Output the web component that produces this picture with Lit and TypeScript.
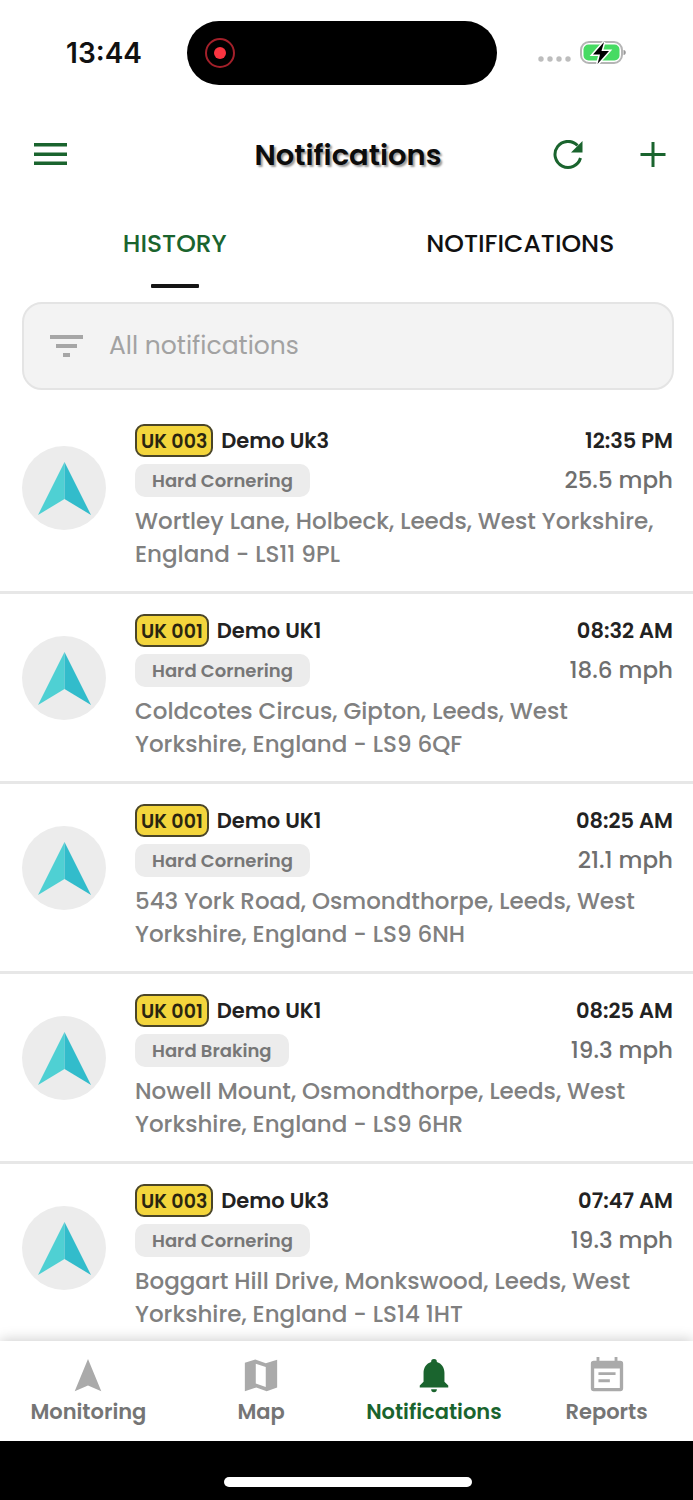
import { LitElement, html, css, svg } from "lit";
import { customElement, property, state } from "lit/decorators.js";
import { classMap } from "lit/directives/class-map.js";

interface VehicleEvent {
  plate: string;
  name: string;
  kind: string;
  time: string;
  speed: string;
  address: string;
}

const EVENTS: VehicleEvent[] = [
  { plate: "UK 003", name: "Demo Uk3", kind: "Hard Cornering", time: "12:35 PM", speed: "25.5 mph", address: "Wortley Lane, Holbeck, Leeds, West Yorkshire, England - LS11 9PL" },
  { plate: "UK 001", name: "Demo UK1", kind: "Hard Cornering", time: "08:32 AM", speed: "18.6 mph", address: "Coldcotes Circus, Gipton, Leeds, West Yorkshire, England - LS9 6QF" },
  { plate: "UK 001", name: "Demo UK1", kind: "Hard Cornering", time: "08:25 AM", speed: "21.1 mph", address: "543 York Road, Osmondthorpe, Leeds, West Yorkshire, England - LS9 6NH" },
  { plate: "UK 001", name: "Demo UK1", kind: "Hard Braking", time: "08:25 AM", speed: "19.3 mph", address: "Nowell Mount, Osmondthorpe, Leeds, West Yorkshire, England - LS9 6HR" },
  { plate: "UK 003", name: "Demo Uk3", kind: "Hard Cornering", time: "07:47 AM", speed: "19.3 mph", address: "Boggart Hill Drive, Monkswood, Leeds, West Yorkshire, England - LS14 1HT" },
];

const NAV = [
  { label: "Monitoring", icon: svg`<path d="M20 2 34 36 20 30 6 36Z"/>` },
  { label: "Map", icon: svg`<path fill-rule="evenodd" d="M3 6 14 2.500 25 6.500 37 3V32L26 36 15 32 3 36ZM14.500 7V28L25 31.500V10.500Z"/>` },
  { label: "Notifications", icon: svg`<path d="M20 2a3 3 0 0 1 3 3.200c5 1.500 8 6 8 11.300v9.500l4 4v2h-30v-2L9 26v-9.500c0-5.300 3-9.800 8-11.300A3 3 0 0 1 20 2Z"/><path d="M17 34h6a3 3 0 0 1-6 0Z"/>` },
  { label: "Reports", icon: svg`<path fill-rule="evenodd" d="M9 0h3v4h16V0h3v4h3a3 3 0 0 1 3 3v26a3 3 0 0 1-3 3H6a3 3 0 0 1-3-3V7a3 3 0 0 1 3-3h3ZM6.500 12v20.500h27V12Z"/><path d="M11 16h18v3H11ZM11 23.500h12v3H11Z"/>` },
];

@customElement("event-row")
class EventRow extends LitElement {
  @property({ attribute: false }) event!: VehicleEvent;

  static styles = css`
    :host {
      display: flex;
      gap: 29px;
      padding: 16px 20px 20px 22px;
      border-bottom: 3px solid #e7e7e7;
    }
    .avatar {
      flex: none;
      width: 84px;
      height: 84px;
      margin-top: 26px;
      border-radius: 50%;
      background: #ececec;
    }
    .body {
      flex: 1;
      min-width: 0;
    }
    .line {
      display: flex;
      justify-content: space-between;
      align-items: center;
      height: 40px;
    }
    .vehicle {
      display: flex;
      align-items: center;
      gap: 8px;
    }
    .plate {
      box-sizing: border-box;
      height: 33px;
      padding: 0 4px;
      border: 2px solid #4a4528;
      border-radius: 9px;
      background: #f3d53c;
      color: #2a2510;
      font-size: 19px;
      font-weight: 600;
      line-height: 31px;
    }
    .name,
    .time {
      color: #222;
      font-size: 21px;
      font-weight: 600;
    }
    .kind {
      padding: 0 17px;
      border-radius: 10px;
      background: #ececec;
      color: #777;
      font-size: 18px;
      font-weight: 600;
      line-height: 33px;
    }
    .speed {
      color: #6f6f6f;
      font-size: 23px;
      font-weight: 500;
    }
    .address {
      margin: 5px 0 0;
      color: #808080;
      font-size: 23px;
      font-weight: 500;
      line-height: 33px;
    }
  `;

  render() {
    const e = this.event;
    return html`
      <svg class="avatar" viewBox="0 0 84 84" aria-hidden="true">
        <path d="M42.500 16 16 69 42.500 53Z" fill="#4fd0d3" />
        <path d="M42.500 16 69 69 42.500 53Z" fill="#32bccb" />
      </svg>
      <div class="body">
        <div class="line">
          <div class="vehicle">
            <span class="plate">${e.plate}</span>
            <span class="name">${e.name}</span>
          </div>
          <time class="time">${e.time}</time>
        </div>
        <div class="line">
          <span class="kind">${e.kind}</span>
          <span class="speed">${e.speed}</span>
        </div>
        <p class="address">${e.address}</p>
      </div>
    `;
  }
}

@customElement("app-root")
class AppRoot extends LitElement {
  @state() private tab = "HISTORY";
  @state() private section = "Notifications";

  static styles = css`
    :host {
      display: flex;
      flex-direction: column;
      height: 100vh;
      background: #fff;
      color: #111;
      font-family: Poppins, Inter, sans-serif;
    }
    button {
      border: 0;
      padding: 0;
      background: none;
      color: inherit;
      font: inherit;
      cursor: pointer;
    }
    svg {
      display: block;
    }
    .status {
      display: grid;
      grid-template-columns: 1fr 310px 1fr;
      align-items: center;
      padding: 21px 9px 0 0;
    }
    .clock {
      justify-self: end;
      padding-right: 45px;
      font-family: Inter, sans-serif;
      font-size: 28px;
      font-weight: 600;
    }
    .island {
      display: flex;
      align-items: center;
      height: 64px;
      padding-left: 17px;
      box-sizing: border-box;
      border-radius: 32px;
      background: #000;
    }
    .signals {
      display: flex;
      align-items: center;
      gap: 8px;
      padding-left: 41px;
    }
    .appbar {
      display: grid;
      grid-template-columns: 1fr auto 1fr;
      align-items: center;
      height: 60px;
      margin-top: 40px;
      padding: 0 27px 0 30px;
      color: #1a642e;
    }
    .title {
      margin: 0;
      color: #0c0c0c;
      font-size: 29px;
      font-weight: 600;
      text-shadow: 2px 2px 2px #0006;
    }
    .menu {
      justify-self: start;
    }
    .actions {
      display: flex;
      justify-self: end;
      gap: 54px;
    }
    .tabs {
      display: flex;
      margin-top: 15px;
      padding-left: 2px;
    }
    .tab {
      display: flex;
      flex: 1;
      flex-direction: column;
      align-items: center;
      gap: 22px;
      height: 88px;
      padding-top: 26px;
      font-size: 25px;
      font-weight: 500;
      line-height: 36px;
    }
    .tab.active {
      color: #1a642e;
    }
    .tab.active::after {
      content: "";
      width: 48px;
      height: 4px;
      border-radius: 1px;
      background: #151515;
    }
    .filter {
      display: flex;
      align-items: center;
      gap: 26px;
      height: 88px;
      box-sizing: border-box;
      margin: 14px 19px 14px 22px;
      padding: 0 26px;
      border: 2px solid #e4e4e4;
      border-radius: 20px;
      background: #f3f3f3;
    }
    .filter-input {
      flex: 1;
      min-width: 0;
      padding: 0;
      border: 0;
      outline: 0;
      background: none;
      color: #555;
      font: 400 25px/36px Poppins, Inter, sans-serif;
    }
    .filter-input::placeholder {
      color: #a2a2a2;
      opacity: 1;
    }
    .list {
      flex: 1;
      min-height: 0;
      overflow: hidden;
    }
    .nav {
      display: flex;
      position: relative;
      height: 100px;
      padding-left: 2px;
      box-sizing: border-box;
      background: #fff;
      box-shadow: 0 -2px 12px #0000002e;
    }
    .nav-item {
      display: flex;
      flex: 1;
      flex-direction: column;
      align-items: center;
      gap: 1px;
      padding-top: 16px;
      color: #aaa;
    }
    .nav-label {
      color: #757575;
      font-size: 21px;
      font-weight: 600;
      line-height: 32px;
    }
    .nav-item.active,
    .nav-item.active .nav-label {
      color: #1a642e;
    }
    .home {
      display: flex;
      justify-content: center;
      align-items: flex-end;
      height: 59px;
      padding: 0 0 13px 2px;
      box-sizing: border-box;
      background: #000;
    }
    .home-bar {
      width: 248px;
      height: 10px;
      border-radius: 5px;
      background: #fff;
    }
  `;

  render() {
    return html`
      <div class="status">
        <span class="clock">13:44</span>
        <div class="island">
          <svg width="32" height="32" viewBox="0 0 32 32" aria-hidden="true">
            <circle cx="16" cy="16" r="14" fill="none" stroke="#a3202a" stroke-width="2" />
            <circle cx="16" cy="16" r="6" fill="#fb3440" />
          </svg>
        </div>
        <div class="signals">
          <svg width="34" height="22" viewBox="0 0 34 22" fill="#bdbdbd" aria-hidden="true">
            <circle cx="3" cy="17" r="2.700" /><circle cx="12" cy="17" r="2.700" />
            <circle cx="21" cy="17" r="2.700" /><circle cx="30" cy="17" r="2.700" />
          </svg>
          <svg width="46" height="26" viewBox="0 0 46 26" aria-hidden="true">
            <rect x="1" y="2" width="41" height="21" rx="8" fill="#fff" stroke="#b5b5b5" stroke-width="2" />
            <rect x="3.500" y="4.500" width="36" height="16" rx="5" fill="#47db63" />
            <path d="M43.500 10c3 0 3 5 0 5Z" fill="#999" />
            <path d="M24 2 13 14.500h7L17.500 24 29 11h-7.500Z" fill="#000" stroke="#fff" stroke-width="3" paint-order="stroke" />
          </svg>
        </div>
      </div>

      <header class="appbar">
        <button class="menu" aria-label="Menu">
          <svg width="40" height="40" viewBox="0 0 40 40" fill="currentColor">
            <path d="M4 8h33v3.500H4ZM4 17.500h33v3.500H4ZM4 26.500h33v3.500H4Z" />
          </svg>
        </button>
        <h1 class="title">Notifications</h1>
        <div class="actions">
          <button aria-label="Refresh">
            <svg width="30" height="30" viewBox="0 0 30 30" fill="none" stroke="currentColor" stroke-width="3">
              <path d="M27.500 18A13 13 0 1 1 24.500 5.500" />
              <path d="M29.500 1V12.500H18Z" fill="currentColor" stroke="none" />
            </svg>
          </button>
          <button aria-label="Add">
            <svg width="29" height="30" viewBox="0 0 29 30" fill="none" stroke="currentColor" stroke-width="3">
              <path d="M16 2V27M3.500 14.500H28.500" />
            </svg>
          </button>
        </div>
      </header>

      <div class="tabs" role="tablist">
        ${["HISTORY", "NOTIFICATIONS"].map(
          (t) => html`<button
            role="tab"
            class=${classMap({ tab: true, active: t === this.tab })}
            aria-selected=${t === this.tab ? "true" : "false"}
            @click=${() => (this.tab = t)}
          >${t}</button>`
        )}
      </div>

      <label class="filter">
        <svg width="33" height="22" viewBox="0 0 33 22" fill="#a6a6a6" aria-hidden="true">
          <path d="M0 0h33v4H0ZM6 9h21v4H6ZM13 18h7v4h-7Z" />
        </svg>
        <input class="filter-input" type="text" placeholder="All notifications" aria-label="Filter notifications" />
      </label>

      <main class="list">${EVENTS.map((e) => html`<event-row .event=${e}></event-row>`)}</main>

      <nav class="nav">
        ${NAV.map(
          (n) => html`<button
            class=${classMap({ "nav-item": true, active: n.label === this.section })}
            @click=${() => (this.section = n.label)}
          >
            <svg width="38" height="38" viewBox="0 0 40 40" fill="currentColor" aria-hidden="true">${n.icon}</svg>
            <span class="nav-label">${n.label}</span>
          </button>`
        )}
      </nav>
      <div class="home"><div class="home-bar"></div></div>
    `;
  }
}
